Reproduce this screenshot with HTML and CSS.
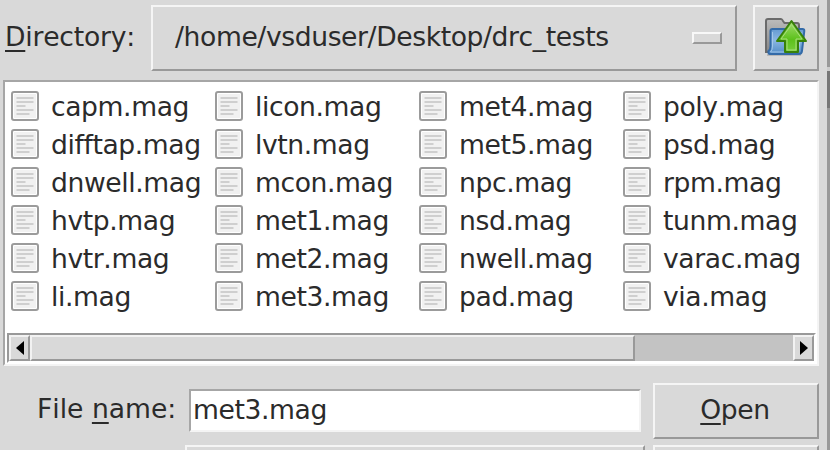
FILE: index.html
```
<!DOCTYPE html>
<html lang="en">
<head>
<meta charset="utf-8">
<title>Open file</title>
<link rel="stylesheet" href="styles.css">
</head>
<body>
<svg class="defs" aria-hidden="true">
  <symbol id="doc" viewBox="0 0 28 30">
    <rect x="1" y="1" width="26" height="28" rx="2" fill="#fff" stroke="#9b9b9b" stroke-width="2"/>
    <rect x="3" y="3" width="22" height="24" fill="#f1f1f1"/>
    <path d="M5.500 7h17M5.500 11h17M5.500 15h9M5.500 19h17M5.500 23h13" stroke="#cfcfcf" stroke-width="2"/>
  </symbol>
</svg>
<div class="dialog">
  <div class="row directory">
    <label class="dir-label"><u>D</u>irectory:</label>
    <button class="raised path"><span>/home/vsduser/Desktop/drc_tests</span><i class="indicator"></i></button>
    <button class="raised up" aria-label="Up">
      <svg width="44" height="40" viewBox="0 0 44 40">
        <defs>
          <linearGradient id="blue" x1="0" y1="0" x2="0" y2="1"><stop offset="0" stop-color="#659bd2"/><stop offset=".45" stop-color="#8bb7e2"/><stop offset="1" stop-color="#528cc6"/></linearGradient>
          <linearGradient id="green" x1="0" y1="0" x2="0" y2="1"><stop offset="0" stop-color="#a4dd70"/><stop offset=".6" stop-color="#5cc11b"/><stop offset="1" stop-color="#78ce3d"/></linearGradient>
          <linearGradient id="gray" x1="0" y1="0" x2="0" y2="1"><stop offset="0" stop-color="#bcbcbc"/><stop offset="1" stop-color="#858585"/></linearGradient>
        </defs>
        <path d="M4 38h34" stroke="#b8b8b8" stroke-width="2"/>
        <path d="M3 35V4q0-2 2-2h13q1 0 2 2l1.500 2H34q2 0 2 2v27H4z" fill="url(#gray)" stroke="#6b6b6b" stroke-width="2"/>
        <path d="M7.500 14q0-2 2-2h30q2 0 1.800 2L39 34q-.3 3-3 3H7q-2 0-1.500-3 2-1 2-5z" fill="url(#blue)" stroke="#346ba8" stroke-width="2"/>
        <path d="M9.500 15v14q0 4-2 6h28l2.500-20" fill="none" stroke="#a4c7e9" stroke-width="1"/>
        <path d="M28.500 4L43 24h-8v11H22V24h-8z" fill="url(#green)" stroke="#388109" stroke-width="2" stroke-linejoin="round"/>
        <path d="M28.500 7.500L18 22h6v11h9V22h6z" fill="none" stroke="#a9de7c" stroke-width="1"/>
      </svg>
    </button>
  </div>

  <div class="listing">
    <ul class="files">
      <li><svg><use href="#doc"/></svg>capm.mag</li>
      <li><svg><use href="#doc"/></svg>difftap.mag</li>
      <li><svg><use href="#doc"/></svg>dnwell.mag</li>
      <li><svg><use href="#doc"/></svg>hvtp.mag</li>
      <li><svg><use href="#doc"/></svg>hvtr.mag</li>
      <li><svg><use href="#doc"/></svg>li.mag</li>
      <li><svg><use href="#doc"/></svg>licon.mag</li>
      <li><svg><use href="#doc"/></svg>lvtn.mag</li>
      <li><svg><use href="#doc"/></svg>mcon.mag</li>
      <li><svg><use href="#doc"/></svg>met1.mag</li>
      <li><svg><use href="#doc"/></svg>met2.mag</li>
      <li><svg><use href="#doc"/></svg>met3.mag</li>
      <li><svg><use href="#doc"/></svg>met4.mag</li>
      <li><svg><use href="#doc"/></svg>met5.mag</li>
      <li><svg><use href="#doc"/></svg>npc.mag</li>
      <li><svg><use href="#doc"/></svg>nsd.mag</li>
      <li><svg><use href="#doc"/></svg>nwell.mag</li>
      <li><svg><use href="#doc"/></svg>pad.mag</li>
      <li><svg><use href="#doc"/></svg>poly.mag</li>
      <li><svg><use href="#doc"/></svg>psd.mag</li>
      <li><svg><use href="#doc"/></svg>rpm.mag</li>
      <li><svg><use href="#doc"/></svg>tunm.mag</li>
      <li><svg><use href="#doc"/></svg>varac.mag</li>
      <li><svg><use href="#doc"/></svg>via.mag</li>
    </ul>
    <div class="scrollbar">
      <span class="arrow"><svg viewBox="0 0 10 16"><path d="M9 1v14L1 8z"/></svg></span>
      <span class="thumb"></span>
      <span class="trough"></span>
      <span class="arrow right"><svg viewBox="0 0 10 16"><path d="M1 1v14l8-7z"/></svg></span>
    </div>
  </div>

  <div class="row filename">
    <label class="name-label">File <u>n</u>ame:</label>
    <div class="entry">met3.mag</div>
    <button class="raised open"><span><u>O</u>pen</span></button>
  </div>
  <div class="row next">
    <span class="raised type"></span>
    <span class="raised cancel"></span>
  </div>
</div>
<div class="edge"><span class="edge-top"></span><span class="edge-gap"></span><span class="edge-dark"></span><span class="edge-rest"></span></div>
</body>
</html>
```
FILE: styles.css
```
* { box-sizing: border-box; }
body {
  margin: 0;
  width: 830px;
  height: 450px;
  overflow: hidden;
  display: flex;
  background: #d9d9d9;
  color: #2b2b2b;
  font: 26.6px/38px "DejaVu Sans", sans-serif;
  font-kerning: none;
  letter-spacing: -.4px;
}
.defs { position: absolute; width: 0; height: 0; }
.dialog { width: 827px; height: 450px; padding-top: 5px; overflow: hidden; flex: none; }
.row { display: flex; }
button { font: inherit; font-kerning: none; letter-spacing: inherit; color: inherit; margin: 0; padding: 0; border-radius: 0; }
u { text-decoration-thickness: 2px; text-underline-offset: 4px; text-decoration-skip-ink: none; }
.raised {
  display: flex;
  align-items: center;
  background: #d9d9d9;
  border: 2px solid;
  border-color: #f5f5f5 #999 #999 #f5f5f5;
}

.directory { height: 66px; }
.dir-label { width: 151px; padding: 13px 0 0 5px; letter-spacing: -.2px; }
.path { width: 586px; justify-content: space-between; padding: 0 13px 2px 22px; letter-spacing: -.4px; }
.indicator { width: 30px; height: 12px; border: 2px solid; border-color: #f8f8f8 #999 #999 #f8f8f8; margin-top: 2px; }
.up { width: 66px; margin-left: 16px; padding-left: 8px; padding-bottom: 2px; }
.up svg { display: block; flex: none; }

.listing {
  width: 816px;
  height: 286px;
  margin: 9px 0 0 3px;
  padding: 7px 1px 1px 2px;
  background: #fff;
  border: 2px solid;
  border-color: #a6a6a6 #f4f4f4 #f4f4f4 #a6a6a6;
}
.files {
  list-style: none;
  margin: 0;
  padding: 0 0 0 4px;
  height: 244px;
  display: grid;
  grid-template-rows: repeat(6, 38px);
  grid-auto-flow: column;
  grid-auto-columns: 204px;
}
.files li { display: flex; white-space: nowrap; line-height: 36px; }
.files svg { width: 28px; height: 30px; margin: 2px 12px 0 0; flex: none; }

.scrollbar {
  display: flex;
  height: 30px;
  background: #c3c3c3;
  border: 2px solid;
  border-color: #999 #fff #fff #999;
}
.arrow {
  width: 21px;
  display: flex;
  align-items: center;
  justify-content: center;
  background: #d9d9d9;
  border: 2px solid;
  border-color: #f2f2f2 #999 #999 #f2f2f2;
}
.arrow svg { width: 10px; height: 16px; }
.thumb { width: 605px; background: #d9d9d9; border: 2px solid; border-color: #f2f2f2 #999 #999 #f2f2f2; }
.trough { flex: 1; }

.filename { height: 56px; margin-top: 17px; }
.name-label { width: 189px; padding: 7px 0 0 37px; white-space: nowrap; letter-spacing: 0; }
.entry {
  width: 452px;
  height: 43px;
  margin: 6px 12px 0 0;
  padding-left: 2px;
  line-height: 37px;
  background: #fff;
  border: 2px solid;
  border-color: #a6a6a6 #f4f4f4 #f4f4f4 #a6a6a6;
}
.open { width: 166px; justify-content: center; padding: 0 2px 3px 0; }
.next { margin-top: 6px; height: 30px; padding-left: 185px; }
.type { width: 460px; }
.cancel { width: 166px; margin-left: 8px; }

.edge { width: 3px; display: flex; flex-direction: column; background: #999; }
.edge-top { height: 67px; background: #999; }
.edge-gap { height: 4px; background: #ccc; }
.edge-dark { height: 37px; background: #777; }
.edge-rest { flex: 1; background: #999; }
```
